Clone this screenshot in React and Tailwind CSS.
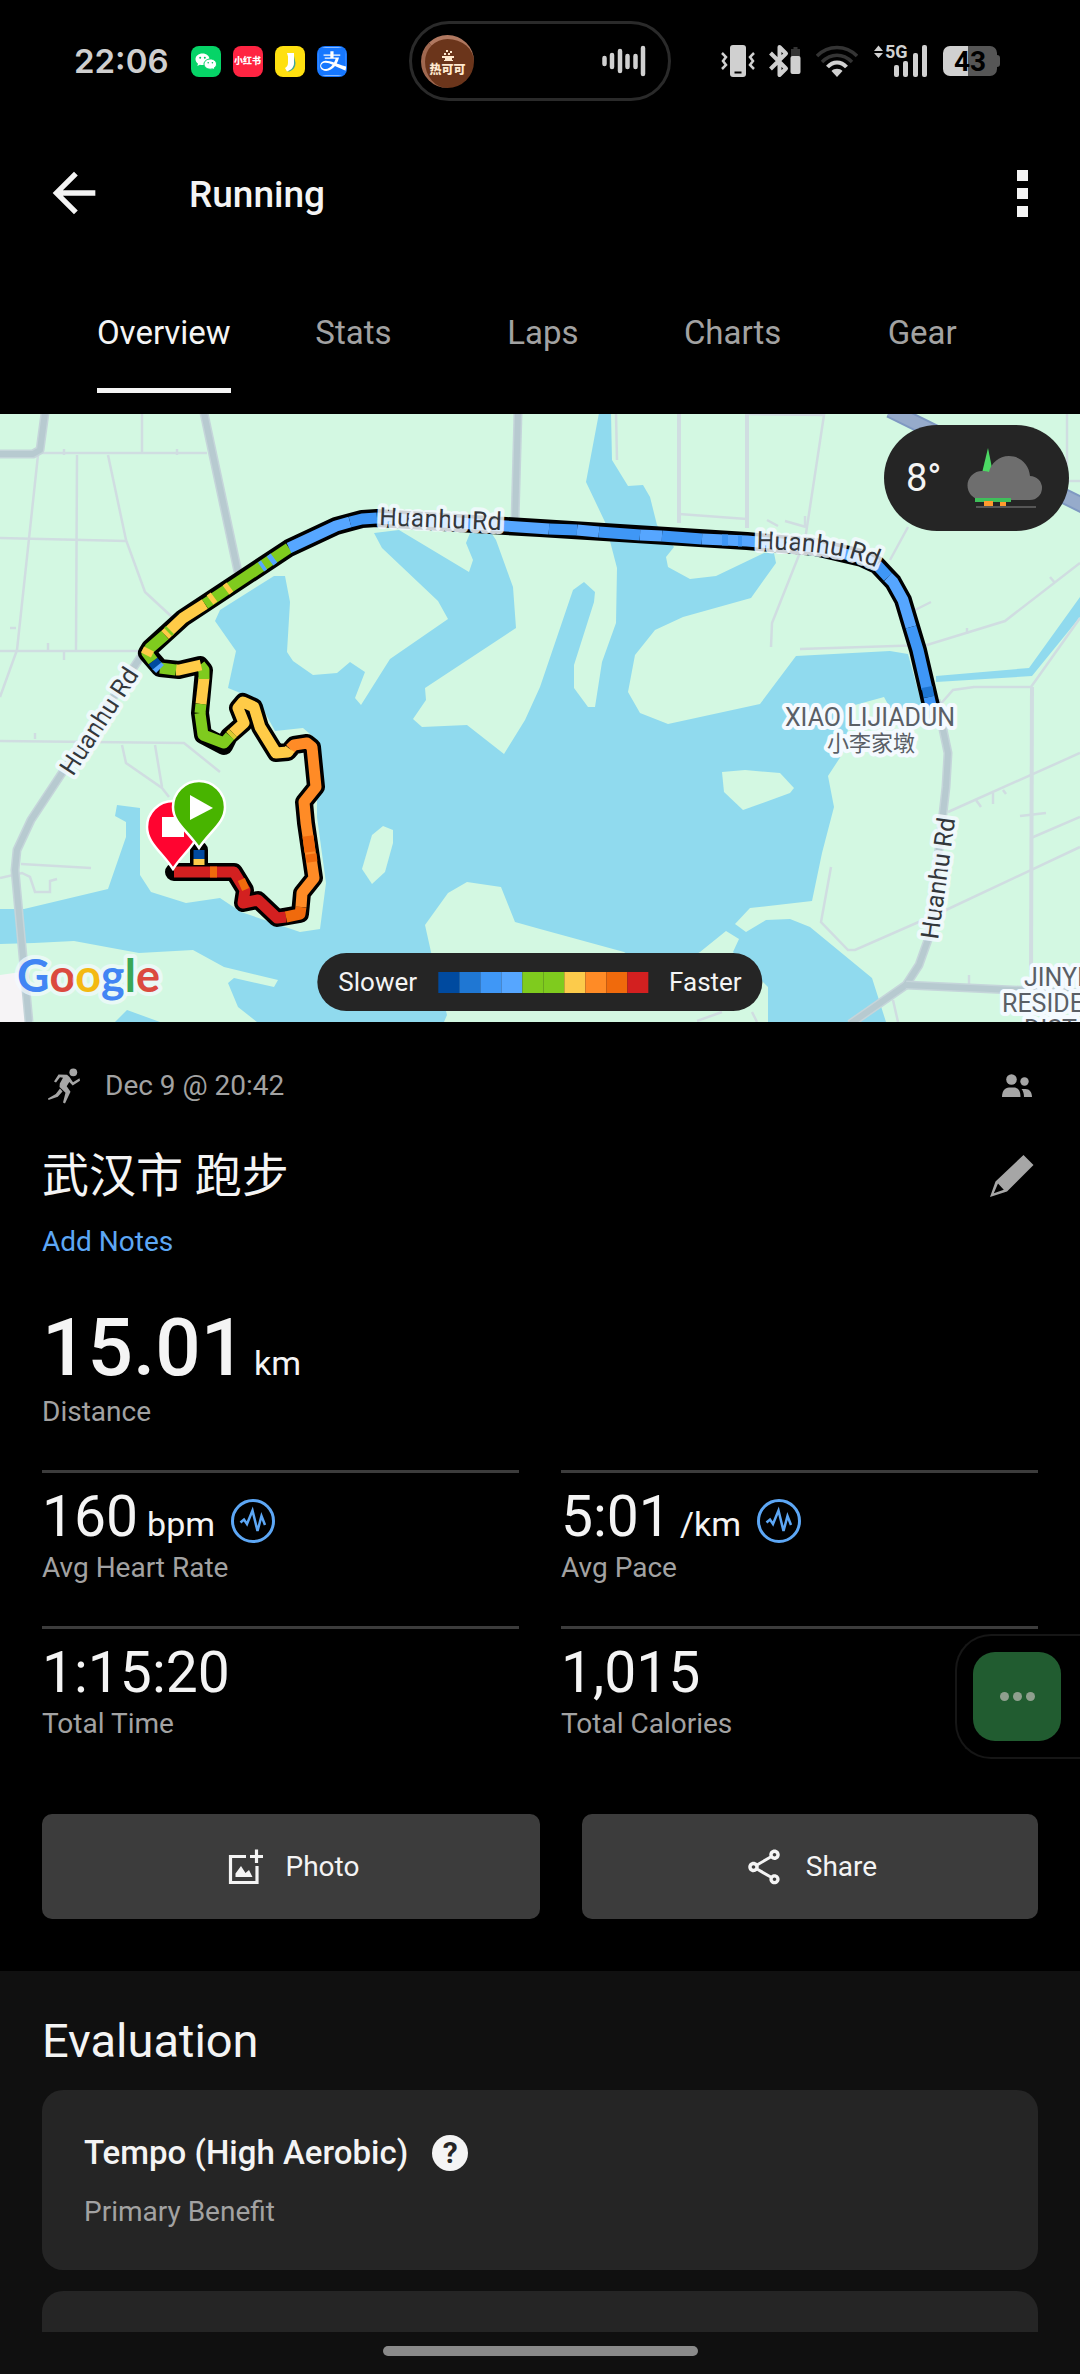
import { useState } from 'react'
import { MdArrowBack, MdOutlineShare } from 'react-icons/md'
import { SiAlipay } from 'react-icons/si'

const TABS = ['Overview', 'Stats', 'Laps', 'Charts', 'Gear']

const PACE_COLORS = [
  'bg-[#004a9f]',
  'bg-[#1f77d3]',
  'bg-[#3f97f6]',
  'bg-[#56a6ff]',
  'bg-[#7fcb1e]',
  'bg-[#7fcb1e]',
  'bg-[#fccb4b]',
  'bg-[#ff8b26]',
  'bg-[#f06a0c]',
  'bg-[#d32020]',
]

const STATS = [
  { value: '160', unit: 'bpm', label: 'Avg Heart Rate', graph: true },
  { value: '5:01', unit: '/km', label: 'Avg Pace', graph: true },
  { value: '1:15:20', label: 'Total Time' },
  { value: '1,015', label: 'Total Calories' },
]

// Map geometry
const LAKE =
  'M274 576L285 576L290 602L287 652L293 661L313 675L337 673L350 662L365 672L355 698L361 705L390 659L448 619L438 601L382 548L374 533L399 530L469 572L473 560L466 543L470 533L492 534L496 540L513 587L516 628L425 688L426 700L413 719L422 727L467 725L504 754L525 720L540 687L573 590L584 582L595 592L594 602L574 665L574 688L588 707L595 707L602 662L616 623L617 568L611 545L605 522L586 482L599 413L611 413L612 460L628 486L643 485L650 497L657 525L674 547L666 557L668 567L690 579L716 576L764 553L774 553L776 563L751 598L683 617L655 630L635 655L628 692L640 713L668 724L760 704L796 656L890 651L908 654L924 712L890 708L884 697L855 705L850 720L843 753L828 776L834 807L822 853L812 901L750 908L735 924L746 932L766 920L790 919L810 927L872 978L886 1022L768 1022L768 987L733 952L739 939L726 931L700 952L660 975L624 952L540 929L515 922L501 887L467 882L448 893L425 925L431 952L447 1015L444 1022L257 1022L238 1007L228 983L234 978L274 987L278 980L224 967L193 950L139 953L74 941L34 943L0 944L0 909L24 909L108 889L126 837L126 822L115 816L117 805L140 808L140 875L151 892L186 903L220 898L241 912L300 932L320 929L326 883L317 817L317 740L303 728L275 731L258 700L228 688L236 651L215 621L220 610Z'

const CANAL = 'M936 676L1029 668L1080 597L1080 617L1032 676L936 682Z'

const ISLANDS = [
  'M383 826L393 830L393 843L385 872L372 884L362 869L372 835Z',
  'M722 772L745 770L780 773L794 788L790 793L743 810L724 792Z',
]

const SMALL_ROADS = [
  'M40 453L207 453',
  'M142 413L142 453',
  'M38 455L17 650L0 697',
  'M77 455L76 650',
  'M108 455L126 540L145 592L172 617',
  'M0 538L126 541',
  'M0 651L141 651',
  'M0 741L184 743L220 772',
  'M122 745L126 763L162 788L169 797',
  'M155 745L162 787',
  'M21 864L91 868',
  'M0 878L22 873L30 877L35 892L50 892L50 881L57 879',
  'M35 739L35 733M64 455L64 449M177 455L177 449M48 650L48 643M64 651L64 660M10 628L16 628',
  'M616 413L617 460',
  'M679 514L747 519',
  'M747 414L824 415L805 540L772 623L771 647',
  'M785 521L806 527M767 520L778 526M805 516L805 527',
  'M908 527L890 560',
  'M800 649L927 645L1005 621L1080 563',
  'M915 610L931 602M1055 583L1050 577M967 634L967 628',
  'M938 707L953 690L974 687L1031 687L1080 618',
  'M1067 413L1067 481L1080 481',
  'M948 812L1080 753',
  'M976 800L981 807M993 793L993 804M1003 790L1006 794',
  'M1031 838L1080 817M1020 816L1046 813',
  'M831 867L821 922L848 950L855 950L946 910L1080 847',
  'M893 1000L898 1022M969 975L969 988M697 1021L722 1012M752 1012L757 1022',
]

const MEDIUM_ROADS = ['M679 413L679 523', 'M747 413L747 528', 'M1032 687L1031 970']

const BIG_ROADS = [
  'M45 413L40 450L33 454L0 454',
  'M204 413L238 572',
  'M518 413L515 522',
  'M142 655L62 773L31 820L17 850L15 870L29 1022',
  'M936 700L941 720L948 753L946 787L929 937L919 965L906 985L850 1024',
  'M906 985L1080 993',
]

const ROUTE =
  'M199 850L199 872L174 872L234 872L245 890L243 903L258 900L277 918L300 914L302 893L314 878L306 823L304 802L316 787L312 747L307 743L294 745L288 752L276 753L260 727L254 707L243 702L238 708L244 723L229 736L224 746L203 735L200 713L204 670L200 665L179 670L160 668L147 653L150 648L183 618L289 548L336 526L362 519L377 518L506 526L540 528L747 541L815 547L862 558L877 565L893 582L903 600L918 650L932 710'

const ROUTE_PARTS = [
  ['#004a9f', 'M199 850L199 859'],
  ['#fccb4b', 'M199 859L199 865'],
  ['#d32020', 'M174 872L234 872L245 890L243 903L258 900L277 918L286 917'],
  ['#f06a0c', 'M210 872L217 872M240 886L247 883'],
  ['#f06a0c', 'M286 917L300 914L301 907'],
  ['#ff8b26', 'M301 907L302 893L314 878L306 823L304 802L316 787L312 747L307 743L294 745L290 749'],
  ['#f06a0c', 'M310 852L308 836M312 862L311 854'],
  ['#ffcb47', 'M290 749L288 752L276 753L260 727L254 707L243 702L238 708L244 723L233 733'],
  ['#d9cb30', 'M233 733L230 736'],
  ['#7fcb1e', 'M230 736L224 743L203 735L200 713'],
  ['#ffcb47', 'M201 704L204 678'],
  ['#7fcb1e', 'M200 713L201 704M204 679L204 670L200 665'],
  ['#ffcb47', 'M201 665L179 670L176 670'],
  ['#7fcb1e', 'M176 670L160 668'],
  ['#56a6ff', 'M160 669L156 665'],
  ['#004a9f', 'M157 666L153 661'],
  ['#7fcb1e', 'M153 661L147 653L150 648L165 635'],
  ['#ffcb47', 'M146 655L149 649'],
  ['#ffcb47', 'M165 635L183 618L205 604'],
  ['#7fcb1e', 'M168 632L170 630'],
  ['#7fcb1e', 'M205 604L289 548'],
  ['#ffcb47', 'M210 600L214 597M226 590L230 587'],
  ['#56a6ff', 'M261 567L264 565M270 561L274 558'],
  ['#56a6ff', 'M289 548L336 526L350 522'],
  ['#3f97f6', 'M350 522L362 519L377 518'],
  ['#56a6ff', 'M377 518L506 526L549 529'],
  ['#3f97f6', 'M549 529L577 530'],
  ['#56a6ff', 'M577 530L599 532'],
  ['#3f97f6', 'M599 532L640 535M662 536L702 539'],
  ['#56a6ff', 'M640 535L662 536M702 539L747 541L815 547L862 558L877 565'],
  ['#3f97f6', 'M722 540L728 540M738 541L742 541'],
  ['#3f97f6', 'M877 565L888 577'],
  ['#56a6ff', 'M888 577L893 582L903 600L911 627'],
  ['#3f97f6', 'M911 627L918 650L927 689'],
  ['#1f77d3', 'M927 687L929 697'],
  ['#3f97f6', 'M929 697L932 710'],
]

function WeChatIcon() {
  return (
    <svg viewBox="0 0 30 30" className="h-full w-full">
      <path d="M11.500 7C7.400 7 4.500 9.600 4.500 12.800c0 1.900 1 3.400 2.500 4.500l-.7 2.300 2.600-1.400c.8.2 1.700.3 2.600.3 4.100 0 7-2.600 7-5.800S15.600 7 11.500 7z" fill="#fff" />
      <path d="M19.300 12.500c-3.600 0-6.300 2.300-6.300 5.100s2.700 5.100 6.300 5.100c.8 0 1.500-.1 2.200-.3l2.100 1.200-.5-2c1.500-.9 2.400-2.300 2.400-4 0-2.800-2.600-5.100-6.200-5.100z" fill="#fff" stroke="#06d467" strokeWidth="1" />
      <g fill="#06c160">
        <circle cx="9.200" cy="11.200" r="1" />
        <circle cx="13.800" cy="11.200" r="1" />
        <circle cx="17.200" cy="16.300" r=".8" />
        <circle cx="21.400" cy="16.300" r=".8" />
      </g>
    </svg>
  )
}

function RunnerIcon() {
  return (
    <svg viewBox="0 0 42 42" className="h-[42px] w-[42px]" fill="#a6a6a6">
      <circle cx="31.300" cy="7.300" r="3.900" />
      <path d="M14 17.500L12 16.500L16.500 9.500L25 9.700L27.500 12L31 17.300L37.500 13.300L38 15.700L30.700 20.500L27.300 17L24.700 21.300L28.500 26.700L23 38.500L21 37.500L23.500 27.700L17.500 22L17.800 18.500L21 12.700L18 12.300z" />
      <path d="M18 23.500L20.500 26.500L15.800 31.700L6.500 35L6 33.500L13.800 29z" />
    </svg>
  )
}

function PeopleIcon() {
  return (
    <svg viewBox="0 0 30 24" className="mr-[6px] h-6 w-[30px]" fill="#a6a6a6">
      <circle cx="9.500" cy="5.500" r="5.300" />
      <path d="M0 23c0-6 3-9.500 7-9.500h5c4 0 6.500 3.500 6.500 9.500z" />
      <circle cx="22.500" cy="7.500" r="4.200" />
      <path d="M19.500 15h4c4 0 6.500 3 6.500 8h-8c0-3.500-.8-6-2.500-8z" />
    </svg>
  )
}

function PencilIcon() {
  return (
    <svg viewBox="0 0 46 44" className="h-11 w-[46px]" fill="#a6a6a6">
      <path d="M34.500 1L44.500 11L18 37.500L1 43L6.500 27.500zM9 29.500L4.800 39.300L14.800 35.800z" fillRule="evenodd" />
    </svg>
  )
}

function GraphIcon() {
  return (
    <svg viewBox="0 0 44 44" className="h-11 w-11 self-end" fill="none" stroke="#5da7f5">
      <circle cx="22" cy="22" r="20.500" strokeWidth="3" />
      <path d="M9.500 23.500L13 20.500L16 25L21.500 11.500L26.500 32L30.500 17L34 26" strokeWidth="2.500" />
    </svg>
  )
}

function PhotoIcon() {
  return (
    <svg viewBox="0 0 42 42" className="h-[42px] w-[42px]" fill="none" stroke="#f4f4f4">
      <path d="M23 10.500H7.500V36.500H34V20" strokeWidth="3.200" />
      <path d="M33.500 3.500V17M27 10.500H40" strokeWidth="3.200" />
      <path d="M12.500 31V27.500L18 20L22.500 27L26 24L29.500 31z" fill="#f4f4f4" stroke="none" />
    </svg>
  )
}

function StatusBar() {
  return (
    <div className="grid h-[122px] grid-cols-[1fr_262px_1fr] items-center">
      <div className="flex items-center pl-[74px]">
        <span className="mr-[22px] font-[Inter] text-[33px] font-semibold leading-10 text-[#cfcfcf]">22:06</span>
        <div className="flex gap-3">
          <div className="h-[31px] w-[30px] overflow-hidden rounded-lg bg-[#06d467]">
            <WeChatIcon />
          </div>
          <div className="flex h-[31px] w-[30px] items-center justify-center rounded-lg bg-[#ff2442] font-['Noto_Sans_CJK_SC',sans-serif] text-[9px] font-black text-white">
            <span className="whitespace-nowrap">小红书</span>
          </div>
          <div className="h-[31px] w-[30px] rounded-lg bg-[#ffe010]">
            <svg viewBox="0 0 30 30" className="h-full w-full">
              <path d="M18.500 7v9.500c0 4-2.500 7-6.500 8.300l2.500.2c4-1.500 6-4.500 6-8.500z" fill="#41a59b" />
              <path d="M12 6.500h7v10c0 4-2.500 7-7 8.500l-2-3.500c2.200-1.200 3-3 3-5.500V10z" fill="#fff" />
            </svg>
          </div>
          <div className="h-[31px] w-[30px] overflow-hidden rounded-lg bg-[#1677ff]">
            <div className="m-px rounded-lg bg-white">
              <SiAlipay className="h-[29px] w-7 text-[#1677ff]" />
            </div>
          </div>
        </div>
      </div>

      <div className="flex h-20 items-center justify-between rounded-full border-3 border-[#2a2a2a] pl-[9px] pr-[22px]">
        <div className="flex h-[53px] w-[53px] flex-col items-center justify-center overflow-hidden rounded-full border-t-4 border-l-4 border-t-[#b07860] border-l-[#a06850] bg-[#6b351b] pr-1 font-['Noto_Sans_CJK_SC',sans-serif] text-[#ffe9cf]">
          <svg viewBox="0 0 14 12" className="h-3 w-[14px]" fill="#ffe9cf">
            <path d="M5 0h2v2H5zM9 1h2v2H9zM3 3h2v2H3zM7 3h2v2H7zM1 6h12v2H1zM4 8h7v2H4zM3 10h9v1H3z" />
          </svg>
          <span className="text-[12px] font-black leading-[14px] whitespace-nowrap">热可可</span>
        </div>
        <svg viewBox="0 0 44 32" className="h-8 w-11" stroke="#d0d0d0" strokeWidth="4.500" strokeLinecap="round">
          <path d="M2.500 13v6M10 10v12M18 6v20M25.500 11v11M33.500 11v11M41 3v26" />
        </svg>
      </div>

      <div className="flex items-center justify-end pr-20 text-[#d0d0d0]">
        <svg viewBox="0 0 34 34" className="mr-[14px] h-[34px] w-[34px]" fill="none" stroke="currentColor">
          <rect x="9" y="1" width="16" height="32" rx="3" fill="currentColor" stroke="none" />
          <path d="M13.500 28.500h7" stroke="#000" strokeWidth="2" />
          <path d="M1 9l4 4-3 4 3 4-4 4M33 9l-4 4 3 4-3 4 4 4" strokeWidth="2.500" />
        </svg>
        <svg viewBox="0 0 32 34" className="mr-[15px] h-[34px] w-8" fill="none" stroke="currentColor">
          <path d="M1.500 9L17 24.500L10.500 31V3L17 9.500L1.500 25" strokeWidth="4" strokeLinejoin="round" />
          <path d="M22 5h2.500V3h4v2H31v8h-9z" fill="#343434" stroke="none" />
          <rect x="21.500" y="12" width="10" height="18" rx="2" fill="currentColor" stroke="none" />
        </svg>
        <svg viewBox="0 0 42 34" className="mr-4 h-[34px] w-[42px]" fill="none" strokeWidth="3.500">
          <path d="M1 12C12 .5 30 .5 41 12" stroke="#343434" />
          <path d="M6 18C15 9 27 9 36 18" stroke="#343434" />
          <path d="M11.500 23C17 17 25 17 30.500 23" stroke="currentColor" strokeWidth="4" />
          <path d="M21 33L15.500 27C18 24 24 24 26.500 27z" fill="currentColor" />
        </svg>
        <svg viewBox="0 0 54 34" className="mr-[15px] h-[34px] w-[54px] overflow-visible" fill="currentColor">
          <path d="M0 7L4.500 1.500L9 7zM0 9L4.500 14L9 9z" />
          <text x="11" y="14" className="font-[Roboto] text-[18px] font-bold">5G</text>
          <rect x="20" y="21" width="5" height="12" rx="2" />
          <rect x="29" y="17" width="5" height="16" rx="2" />
          <rect x="39" y="9" width="5" height="24" rx="2" />
          <rect x="48" y="1" width="5" height="32" rx="2" />
        </svg>
        <svg viewBox="0 0 57 30" className="h-[30px] w-[57px] overflow-visible">
          <path d="M25 0h22a7 7 0 0 1 7 7v2a3 3 0 0 1 3 3v6a3 3 0 0 1-3 3v2a7 7 0 0 1-7 7H25z" fill="#565656" />
          <path d="M25 0H7a7 7 0 0 0-7 7v16a7 7 0 0 0 7 7h18z" fill="#d0d0d0" />
          <text x="27" y="25" textAnchor="middle" className="fill-black font-[Roboto] text-[28px] font-bold">43</text>
        </svg>
      </div>
    </div>
  )
}

function RouteMap() {
  const halo = 'stroke-[#f4faff] [paint-order:stroke] [stroke-width:8px] [stroke-linejoin:round]'
  const roadLabel = `${halo} fill-[#33373b] font-[Roboto] text-[25px] [stroke-opacity:0.85]`
  const placeLabel = `${halo} fill-[#5a5f66] font-[Roboto,'Noto_Sans_CJK_SC',sans-serif]`

  return (
    <svg viewBox="0 414 1080 608" preserveAspectRatio="xMidYMid slice" className="block h-[608px] w-full" fill="none">
      <rect y="414" width="1080" height="608" fill="#d3f8e2" />
      <path d="M0 975L21 972L28 1022L0 1022Z" fill="#f6f4f6" />
      <path d={LAKE} fill="#90daee" />
      <path d={CANAL} fill="#90daee" />
      <path d="M115 1022L127 1010L160 1022Z" fill="#90daee" />
      {ISLANDS.map((d) => (
        <path key={d} d={d} fill="#d3f8e2" />
      ))}
      {SMALL_ROADS.map((d) => (
        <path key={d} d={d} stroke="#d0dde1" strokeWidth="2.500" />
      ))}
      {MEDIUM_ROADS.map((d) => (
        <path key={d} d={d} stroke="#d0dde1" strokeWidth="4" />
      ))}
      {BIG_ROADS.map((d) => (
        <g key={d} strokeLinejoin="round">
          <path d={d} stroke="#c5d5da" strokeWidth="9" />
          <path d={d} stroke="#b7cad0" strokeWidth="6" />
        </g>
      ))}
      <path d="M890 410L1084 506" stroke="#7f99c2" strokeWidth="16" />
      <path d="M890 410L1084 506" stroke="#96abcb" strokeWidth="12" />

      <path d={ROUTE} stroke="#000" strokeWidth="18" strokeLinecap="round" strokeLinejoin="round" />
      {ROUTE_PARTS.map(([color, d]) => (
        <path key={d} d={d} stroke={color} strokeWidth="11" strokeLinejoin="round" />
      ))}

      <path id="road-north" d="M379 525L520 531" />
      <path id="road-bend" d="M756 549Q815 550 845 557T905 583" />
      <path id="road-west" d="M73 777L143 669" />
      <path id="road-east" d="M938 940L958 800" />
      <text className={roadLabel}><textPath href="#road-north">Huanhu Rd</textPath></text>
      <text className={roadLabel}><textPath href="#road-bend">Huanhu Rd</textPath></text>
      <text className={roadLabel}><textPath href="#road-west">Huanhu Rd</textPath></text>
      <text className={roadLabel}><textPath href="#road-east">Huanhu Rd</textPath></text>

      <text x="870" y="726" textAnchor="middle" className={`${placeLabel} text-[25px]`}>XIAO LIJIADUN</text>
      <text x="871" y="751" textAnchor="middle" className={`${placeLabel} text-[22px]`}>小李家墩</text>
      <text x="1024" y="986" className={`${placeLabel} text-[25px]`}>JINYI</text>
      <text x="1002" y="1012" className={`${placeLabel} text-[25px]`}>RESIDE</text>
      <text x="1024" y="1038" className={`${placeLabel} text-[25px]`}>DIST</text>

      <g stroke="#fff" strokeWidth="2.500">
        <path d="M173 869C162 852 147 843 147 827a26 26 0 0 1 52 0C199 843 184 852 173 869Z" fill="#ff0430" />
        <rect x="162" y="817" width="22" height="20" fill="#fff" stroke="none" />
        <path d="M199 848C188 831 173 823 173 807a26 26 0 0 1 52 0C225 823 210 831 199 848Z" fill="#48b400" />
        <path d="M190 795L213 808L190 820Z" fill="#fff" stroke="none" />
      </g>

      <text x="17" y="992" className={`${halo} font-[Lato] text-[45px] font-bold [stroke-opacity:0.7]`}>
        <tspan fill="#4285f4">G</tspan>
        <tspan fill="#db4a3f">o</tspan>
        <tspan fill="#f4b912">o</tspan>
        <tspan fill="#4285f4">g</tspan>
        <tspan fill="#3aa757">l</tspan>
        <tspan fill="#db4a3f">e</tspan>
      </text>
    </svg>
  )
}

function WeatherBadge() {
  return (
    <div className="absolute top-[11px] right-[11px] flex h-[106px] w-[185px] items-center justify-between rounded-full bg-[#252525] pr-[26px] pl-[22px]">
      <span className="text-[38px] leading-[44px] text-[#f4f4f4]">8°</span>
      <svg viewBox="0 0 76 64" className="h-16 w-[76px]">
        <path d="M15 27L21 2L26 27z" fill="#4cd964" />
        <path d="M15 54a14.500 14.500 0 0 1 0-29c3 0 5 0 7 1C24 17 32 10 42 10c11 0 20 8 21 20a12 12 0 0 1 0 24z" fill="#6e6e6e" />
        <rect x="8" y="52" width="36" height="4" fill="#3fbf5a" />
        <rect x="17" y="55" width="9" height="5" fill="#ff9a2e" />
        <rect x="33" y="56" width="6" height="4" fill="#ff9a2e" />
        <rect x="9" y="60" width="60" height="2" fill="#565656" />
      </svg>
    </div>
  )
}

function PaceLegend() {
  return (
    <div className="absolute bottom-[11px] left-1/2 flex h-[58px] -translate-x-1/2 items-center gap-[21px] rounded-full bg-[#252525] px-[21px] text-[26px] leading-8 text-[#f4f4f4]">
      <span>Slower</span>
      <div className="flex">
        {PACE_COLORS.map((color, i) => (
          <div key={i} className={`h-[21px] w-[21px] ${color}`} />
        ))}
      </div>
      <span>Faster</span>
    </div>
  )
}

function Stat({ value, unit, label, graph }) {
  return (
    <div className="h-[156px] border-t-3 border-[#3c3c3c] pt-[12px]">
      <div className="flex h-16 items-baseline pb-[6px]">
        <span className="text-[57px] leading-[64px]">{value}</span>
        {unit && <span className="ml-[9px] mr-4 text-[34px]">{unit}</span>}
        {graph && <GraphIcon />}
      </div>
      <div className="mt-[3px] text-[28px] leading-8 text-[#a2a2a2]">{label}</div>
    </div>
  )
}

function App() {
  const [activeTab, setActiveTab] = useState('Overview')

  return (
    <div className="min-h-screen overflow-hidden bg-black font-[Roboto,'Noto_Sans_CJK_SC',sans-serif] text-[#f4f4f4]">
      <StatusBar />

      <header className="flex h-[142px] items-center px-[42px]">
        <button aria-label="Back">
          <MdArrowBack className="h-16 w-16" />
        </button>
        <h1 className="ml-[83px] flex-1 pt-1 text-[37px] font-medium leading-[44px]">Running</h1>
        <button aria-label="More options" className="flex flex-col gap-[7px] px-[10px]">
          <span className="h-[11px] w-[11px] bg-[#f4f4f4]" />
          <span className="h-[11px] w-[11px] bg-[#f4f4f4]" />
          <span className="h-[11px] w-[11px] bg-[#f4f4f4]" />
        </button>
      </header>

      <nav className="grid grid-cols-5 pr-[63px] pl-[69px] pb-[21px]">
        {TABS.map((tab) => (
          <div key={tab} className="flex justify-center">
            <button
              onClick={() => setActiveTab(tab)}
              className={`border-b-5 pt-[49px] pb-[35px] text-[33px] leading-10 ${
                activeTab === tab ? 'border-[#f4f4f4] text-[#f4f4f4]' : 'border-transparent text-[#a2a2a2]'
              }`}
            >
              {tab}
            </button>
          </div>
        ))}
      </nav>

      <div className="relative">
        <RouteMap />
        <WeatherBadge />
        <PaceLegend />
      </div>

      <section className="relative px-[42px] pt-[43px] pb-[52px]">
        <div className="flex h-[42px] items-center text-[28px] text-[#a2a2a2]">
          <RunnerIcon />
          <span className="ml-[21px] flex-1">Dec 9 @ 20:42</span>
          <PeopleIcon />
        </div>

        <div className="mt-[45px] flex h-12 items-center justify-between">
          <h2 className="text-[47px] leading-[48px]">武汉市 跑步</h2>
          <button aria-label="Edit name" className="mr-[3px]">
            <PencilIcon />
          </button>
        </div>
        <a href="#notes" className="mt-[26px] block w-fit text-[28px] leading-8 text-[#5da7f5]">Add Notes</a>

        <div className="mt-[50px] flex items-baseline gap-2">
          <span className="text-[80px] font-medium leading-[80px]">15.01</span>
          <span className="text-[34px] leading-10">km</span>
        </div>
        <div className="mt-2 text-[28px] leading-8 text-[#a2a2a2]">Distance</div>

        <div className="mt-[42px] grid grid-cols-2 gap-x-[42px]">
          {STATS.map((stat) => (
            <Stat key={stat.label} {...stat} />
          ))}
        </div>

        <div className="mt-8 grid grid-cols-[498fr_456fr] gap-[42px] text-[28px]">
          <button className="flex h-[105px] items-center justify-center gap-[21px] rounded-[10px] bg-[#3c3c3c]">
            <PhotoIcon />
            Photo
          </button>
          <button className="flex h-[105px] items-center justify-center gap-[21px] rounded-[10px] bg-[#3c3c3c]">
            <MdOutlineShare className="h-[42px] w-[42px]" />
            Share
          </button>
        </div>

        {/* Floating voice button docked to the right edge */}
        <div className="absolute right-0 bottom-[212px] rounded-l-[36px] border-2 border-r-0 border-[#161616] bg-black py-4 pr-[19px] pl-4">
          <button aria-label="Recording" className="flex h-[89px] w-[88px] items-center justify-center gap-1 rounded-[22px] bg-[#215c30]">
            <span className="h-[9px] w-[9px] rounded-full bg-[#8f9f8e]" />
            <span className="h-[9px] w-[9px] rounded-full bg-[#8f9f8e]" />
            <span className="h-[9px] w-[9px] rounded-full bg-[#8f9f8e]" />
          </button>
        </div>
      </section>

      <section className="bg-[#101010] px-[42px] pt-[42px]">
        <h2 className="text-[47px] leading-[56px]">Evaluation</h2>
        <div className="mt-[21px] rounded-[21px] bg-[#252525] px-[42px] pt-[42px] pb-[42px]">
          <div className="flex items-center gap-6">
            <h3 className="text-[33px] font-medium leading-[42px]">Tempo (High Aerobic)</h3>
            <button aria-label="Help" className="flex h-9 w-9 items-center justify-center rounded-full bg-[#f4f4f4] text-[30px] font-bold leading-9 text-[#252525]">
              ?
            </button>
          </div>
          <p className="mt-[22px] text-[28px] leading-8 text-[#a2a2a2]">Primary Benefit</p>
        </div>
        <div className="mt-[21px] h-[41px] rounded-t-[21px] bg-[#252525]" />
      </section>

      <div className="flex justify-center bg-[#101010] pt-[14px] pb-[18px]">
        <div className="h-[10px] w-[315px] rounded-full bg-[#8a8a8a]" />
      </div>
    </div>
  )
}

export default App
